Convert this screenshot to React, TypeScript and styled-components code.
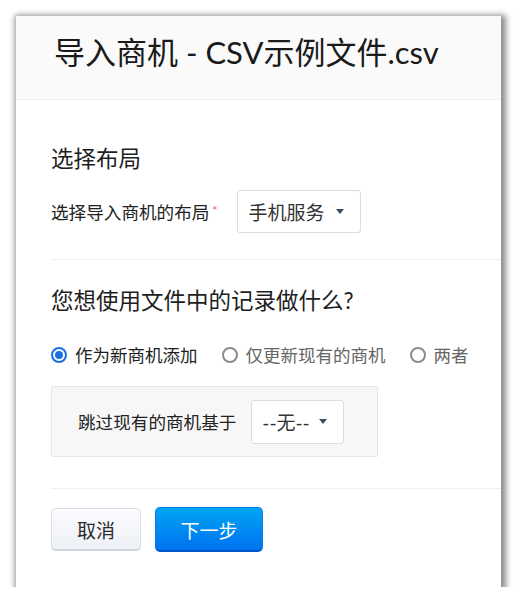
import React from "react";
import styled, { createGlobalStyle } from "styled-components";

const Global = createGlobalStyle`
  html, body { margin: 0; padding: 0; background: #ffffff; }
  body { font-family: "Lato", "Noto Sans CJK SC", sans-serif; color: #222; }
  * { box-sizing: border-box; }
`;

const Window = styled.div`
  margin: 16px 0 0 16px;
  width: 485px;
  height: 571px;
  background: #fff;
  box-shadow: 2px 2px 6px 3px rgba(0, 0, 0, 0.45);
  display: flex;
  flex-direction: column;
`;

const Header = styled.div`
  height: 84px;
  background: #fafafa;
  border-bottom: 1px solid #efefef;
  padding: 16px 0 0 38px;
`;

const Title = styled.h1`
  margin: 0;
  font-size: 31px;
  font-weight: 400;
  line-height: 40px;
  color: #1a1a1a;
  white-space: nowrap;
`;

const Body = styled.div`
  margin-left: 35px;
  display: flex;
  flex-direction: column;
`;

const Section = styled.div<{ $pt: number; $pb: number }>`
  padding-top: ${(p) => p.$pt}px;
  padding-bottom: ${(p) => p.$pb}px;
  border-bottom: 1px solid #f0f0f0;
`;

const Heading = styled.h2`
  margin: 0;
  font-size: 22.5px;
  font-weight: 400;
  line-height: 30px;
  color: #1e1e1e;
  white-space: nowrap;
`;

const FieldRow = styled.div`
  margin-top: 16px;
  display: flex;
  align-items: center;
  gap: 20px;
`;

const Label = styled.span`
  font-size: 17.6px;
  color: #222;
  white-space: nowrap;
`;

const Required = styled.span`
  color: #e8545a;
  font-size: 12px;
  vertical-align: 4px;
  margin-left: 3px;
`;

const Select = styled.div<{ $w: number; $h: number }>`
  width: ${(p) => p.$w}px;
  height: ${(p) => p.$h}px;
  border: 1px solid #dcdcdc;
  border-radius: 3px;
  background: #fff;
  display: flex;
  align-items: center;
  justify-content: space-between;
  padding: 0 16px 0 10px;
  font-size: 19px;
  color: #333;
  white-space: nowrap;
`;

const Caret = styled.span`
  width: 0;
  height: 0;
  border-left: 4.5px solid transparent;
  border-right: 4.5px solid transparent;
  border-top: 5px solid #3a4d5e;
`;

const RadioRow = styled.div`
  margin-top: 26px;
  display: flex;
  align-items: center;
  gap: 24px;
`;

const RadioItem = styled.label<{ $active?: boolean }>`
  display: flex;
  align-items: center;
  gap: 8px;
  font-size: 17.5px;
  color: ${(p) => (p.$active ? "#1e1e1e" : "#666")};
  white-space: nowrap;
`;

const RadioCircle = styled.span<{ $active?: boolean }>`
  width: 16px;
  height: 16px;
  border-radius: 50%;
  border: 2px solid ${(p) => (p.$active ? "#1a6fe0" : "#8a8a8f")};
  display: flex;
  align-items: center;
  justify-content: center;
  &::after {
    content: "";
    width: 8px;
    height: 8px;
    border-radius: 50%;
    background: ${(p) => (p.$active ? "#1a6fe0" : "transparent")};
  }
`;

const SubBox = styled.div`
  margin-top: 19px;
  width: 327px;
  height: 71px;
  background: #f7f7f7;
  border: 1px solid #e6e6e6;
  border-radius: 2px;
  display: flex;
  align-items: center;
  padding-left: 26px;
  gap: 15px;
`;

const Footer = styled.div`
  padding-top: 18px;
  display: flex;
  align-items: center;
  gap: 14px;
`;

const Button = styled.button<{ $primary?: boolean }>`
  font-family: inherit;
  font-size: 19px;
  border-radius: 5px;
  cursor: pointer;
  display: flex;
  align-items: center;
  justify-content: center;
  ${(p) =>
    p.$primary
      ? `
    width: 108px;
    height: 45px;
    color: #fff;
    border: 1px solid #0a7ae8;
    border-bottom: 2px solid #0058c8;
    background: linear-gradient(#00a5f2, #0072f2);
  `
      : `
    width: 90px;
    height: 43px;
    color: #2a2a2a;
    border: 1px solid #d9dde6;
    border-bottom: 2px solid #cfd3dc;
    background: linear-gradient(#fbfcfe, #edf0f6);
  `}
`;

export default function App() {
  return (
    <>
      <Global />
      <Window>
        <Header>
          <Title>导入商机 - CSV示例文件.csv</Title>
        </Header>
        <Body>
          <Section $pt={44} $pb={26}>
            <Heading>选择布局</Heading>
            <FieldRow>
              <Label>
                选择导入商机的布局<Required>*</Required>
              </Label>
              <Select $w={124} $h={43}>
                手机服务
                <Caret />
              </Select>
            </FieldRow>
          </Section>
          <Section $pt={26} $pb={31}>
            <Heading>您想使用文件中的记录做什么?</Heading>
            <RadioRow>
              <RadioItem $active>
                <RadioCircle $active />
                作为新商机添加
              </RadioItem>
              <RadioItem>
                <RadioCircle />
                仅更新现有的商机
              </RadioItem>
              <RadioItem>
                <RadioCircle />
                两者
              </RadioItem>
            </RadioRow>
            <SubBox>
              <Label>跳过现有的商机基于</Label>
              <Select $w={93} $h={44}>
                --无--
                <Caret />
              </Select>
            </SubBox>
          </Section>
          <Footer>
            <Button>取消</Button>
            <Button $primary>下一步</Button>
          </Footer>
        </Body>
      </Window>
    </>
  );
}
